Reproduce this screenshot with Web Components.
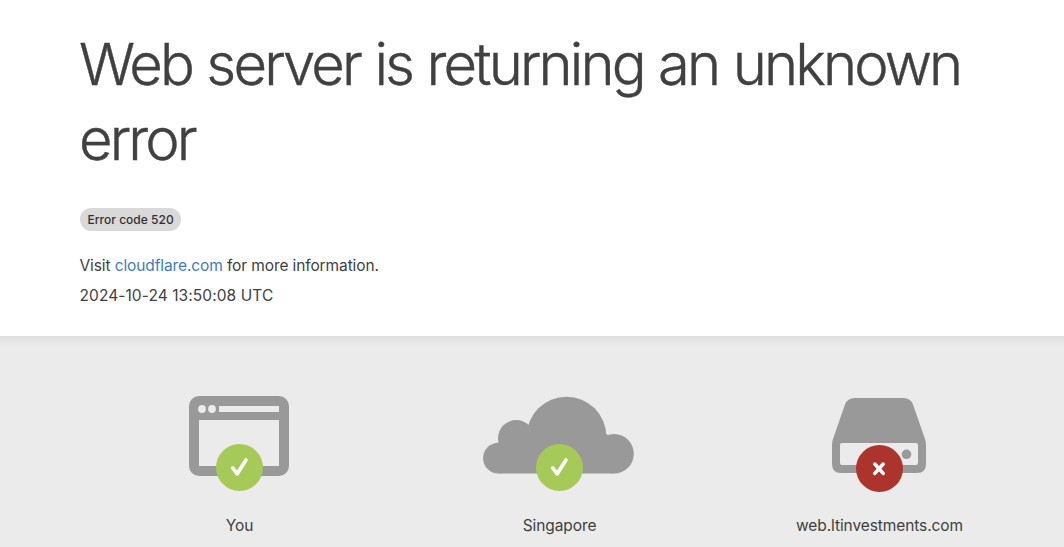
<!DOCTYPE html>
<html lang="en">
<head>
<meta charset="utf-8">
<title>Web server is returning an unknown error</title>
<style>
    body {
        margin: 0;
        overflow: hidden;
        background: #fff;
        color: #404040;
        font-family: Inter, "Liberation Sans", sans-serif;
        font-size: 15.5px;
        line-height: 30px;
    }
</style>
</head>
<body>
<error-page></error-page>

<script>
const ICONS = {
    browser: `
        <svg width="100" height="80" viewBox="0 0 100 80">
            <path fill="#999" fill-rule="evenodd" d="M10 0H90A10 10 0 0 1 100 10V70A10 10 0 0 1 90 80H10A10 10 0 0 1 0 70V10A10 10 0 0 1 10 0ZM30 10V16H90V10ZM10 24V70H90V24Z"/>
            <circle cx="13" cy="13" r="3.9" fill="#ebebeb"/>
            <circle cx="23" cy="13" r="3.9" fill="#ebebeb"/>
        </svg>`,
    cloud: `
        <svg width="151" height="78" viewBox="0 0 151 78" fill="#999">
            <circle cx="83.5" cy="40.5" r="39.8"/>
            <circle cx="33.3" cy="42.3" r="18.3"/>
            <circle cx="15.5" cy="62.2" r="15.4"/>
            <circle cx="131" cy="57.8" r="19.8"/>
            <path d="M15.5 46.8L45 38H124L131 57V77.6H15.5Z"/>
        </svg>`,
    server: `
        <svg width="94" height="75" viewBox="0 0 94 75">
            <path fill="#999" fill-rule="evenodd" d="M22.5 0H71.5Q78.5 0 81 6.5L93 41Q94 44 94 47V66Q94 75 85 75H9Q0 75 0 66V47Q0 44 1 41L13 6.5Q15.5 0 22.5 0ZM10 45Q8 45 8 47V65Q8 67 10 67H84Q86 67 86 65V47Q86 45 84 45Z"/>
            <circle cx="74.5" cy="56.3" r="4.8" fill="#999"/>
        </svg>`
};

const MARKS = {
    ok: '<path d="M16.8 24L21.2 29.8L30 16" stroke-width="3.7"/>',
    error: '<path d="M18.8 19L27.2 28.4M27.2 19L18.8 28.4" stroke-width="3.5"/>'
};

class ErrorBadge extends HTMLElement {
    constructor() {
        super();
        this.attachShadow({ mode: 'open' });
        this.shadowRoot.innerHTML = `
            <style>
                :host {
                    display: inline-block;
                    padding: 0 7.5px;
                    border-radius: 12px;
                    background: #d9d9d9;
                    color: #313131;
                    font-size: 12px;
                    font-weight: 500;
                    line-height: 23px;
                    letter-spacing: 0.02px;
                    white-space: nowrap;
                }
            </style>
            <slot></slot>
        `;
    }
}
customElements.define('error-badge', ErrorBadge);

class ErrorHeader extends HTMLElement {
    constructor() {
        super();
        this.attachShadow({ mode: 'open' });
        this.shadowRoot.innerHTML = `
            <style>
                :host { display: block; height: 336px; padding: 27px 80px 0; box-sizing: border-box; }
                h1 {
                    margin: 0 0 0 -1px;
                    font-size: 58px;
                    font-weight: 300;
                    line-height: 75px;
                    letter-spacing: -2.87px;
                    word-spacing: 0.9px;
                    -webkit-text-stroke: 0.4px;
                }
                .badge { display: flex; margin: 31px 0 20px; }
                p { margin: 0 0 0 -0.5px; }
                .visit { letter-spacing: -0.11px; }
                .time { letter-spacing: 0.08px; }
                a { color: #3f7bc1; text-decoration: none; }
            </style>
            <h1><slot name="title"></slot></h1>
            <div class="badge"><error-badge><slot name="code"></slot></error-badge></div>
            <p class="visit">Visit <a href="#">cloudflare.com</a> for more information.</p>
            <p class="time"><slot name="time"></slot></p>
        `;
    }
}
customElements.define('error-header', ErrorHeader);

class StatusItem extends HTMLElement {
    constructor() {
        super();
        this.attachShadow({ mode: 'open' });
    }

    connectedCallback() {
        const status = this.getAttribute('status');
        const icon = this.getAttribute('icon');
        this.shadowRoot.innerHTML = `
            <style>
                :host { display: block; width: 320px; text-align: center; letter-spacing: -0.09px; }
                .icon {
                    position: relative;
                    display: flex;
                    justify-content: center;
                    align-items: flex-end;
                    height: 80px;
                    margin-bottom: 35px;
                }
                .icon.cloud { height: 78px; margin-bottom: 37px; }
                .icon.server { height: 77px; margin-bottom: 38px; }
                .icon > svg { display: block; }
                .icon.cloud > svg { margin-right: 1px; }
                .label { padding-left: 1px; }
                .mark {
                    position: absolute;
                    top: 48px;
                    left: 137px;
                    width: 47px;
                    height: 47px;
                    border-radius: 50%;
                    background: #a5ca58;
                }
                .mark.error { top: 49px; background: #ad332d; }
                .mark svg { display: block; }
            </style>
            <div class="icon ${icon}">
                ${ICONS[icon]}
                <div class="mark ${status}">
                    <svg width="47" height="47" fill="none" stroke="#fff" stroke-linecap="round" stroke-linejoin="round">${MARKS[status]}</svg>
                </div>
            </div>
            <div class="label"><slot></slot></div>
        `;
    }
}
customElements.define('status-item', StatusItem);

class StatusBar extends HTMLElement {
    constructor() {
        super();
        this.attachShadow({ mode: 'open' });
        this.shadowRoot.innerHTML = `
            <style>
                :host {
                    display: flex;
                    height: 211px;
                    padding: 60px 0 0 79px;
                    box-sizing: border-box;
                    background: linear-gradient(#dedede, #ebebeb 10px);
                }
            </style>
            <slot></slot>
        `;
    }
}
customElements.define('status-bar', StatusBar);

class ErrorPage extends HTMLElement {
    constructor() {
        super();
        this.attachShadow({ mode: 'open' });
        this.shadowRoot.innerHTML = `
            <style>
                :host { display: block; }
            </style>
            <error-header>
                <span slot="title">Web server is returning an unknown error</span>
                <span slot="code">Error code 520</span>
                <span slot="time">2024-10-24 13:50:08 UTC</span>
            </error-header>
            <status-bar>
                <status-item icon="browser" status="ok">You</status-item>
                <status-item icon="cloud" status="ok">Singapore</status-item>
                <status-item icon="server" status="error">web.ltinvestments.com</status-item>
            </status-bar>
        `;
    }
}
customElements.define('error-page', ErrorPage);
</script>
</body>
</html>
